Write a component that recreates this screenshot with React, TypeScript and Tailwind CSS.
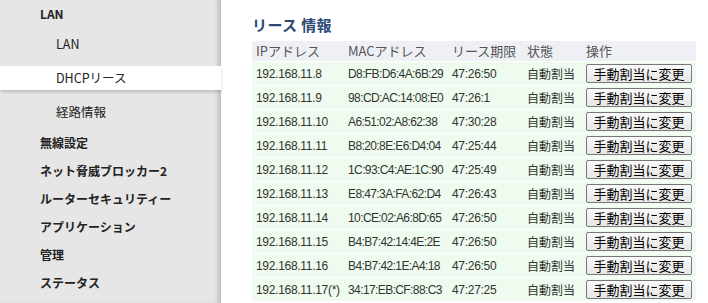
const NAV = [
  { label: 'LAN', level: 0, cls: 'h-[28px]' },
  { label: 'LAN', level: 1, cls: 'mt-[4px] h-[24px]' },
  { label: 'DHCPリース', level: 1, cls: 'mt-[10px] h-[24px]', active: true },
  { label: '経路情報', level: 1, cls: 'mt-[10px] h-[24px]' },
  { label: '無線設定', level: 0, cls: 'mt-[5px] h-[28px]' },
  { label: 'ネット脅威ブロッカー2', level: 0, cls: 'h-[27px]' },
  { label: 'ルーターセキュリティー', level: 0, cls: 'h-[29px]' },
  { label: 'アプリケーション', level: 0, cls: 'h-[28px]' },
  { label: '管理', level: 0, cls: 'h-[28px]' },
  { label: 'ステータス', level: 0, cls: 'h-[28px]' },
]

const LEASES = [
  ['192.168.11.8', 'D8:FB:D6:4A:6B:29', '47:26:50'],
  ['192.168.11.9', '98:CD:AC:14:08:E0', '47:26:1'],
  ['192.168.11.10', 'A6:51:02:A8:62:38', '47:30:28'],
  ['192.168.11.11', 'B8:20:8E:E6:D4:04', '47:25:44'],
  ['192.168.11.12', '1C:93:C4:AE:1C:90', '47:25:49'],
  ['192.168.11.13', 'E8:47:3A:FA:62:D4', '47:26:43'],
  ['192.168.11.14', '10:CE:02:A6:8D:65', '47:26:50'],
  ['192.168.11.15', 'B4:B7:42:14:4E:2E', '47:26:50'],
  ['192.168.11.16', 'B4:B7:42:1E:A4:18', '47:26:50'],
  ['192.168.11.17(*)', '34:17:EB:CF:88:C3', '47:27:25'],
]

const COLS = 'grid grid-cols-[92px_104px_75px_59px_114px]'

export default function App() {
  return (
    <div className="flex h-[303px] w-[708px] overflow-hidden bg-white font-['Noto_Sans_CJK_JP','Noto_Sans',sans-serif] text-[#222]">
      {/* Sidebar */}
      <div className="relative flex w-[221px] shrink-0 flex-col bg-[#e6e6e6] shadow-[inset_-6px_0_5px_-3px_rgba(0,0,0,0.18)]">
        {NAV.map((item, i) => (
          <div
            key={i}
            className={`flex shrink-0 items-center ${item.cls} ${
              item.level === 0 ? 'pl-10 text-[12px] font-bold' : 'pl-14 text-[12.5px]'
            } ${item.active ? 'relative z-10 bg-white shadow-[0_2px_3px_rgba(0,0,0,0.18)]' : ''}`}
          >
            {item.label}
          </div>
        ))}
      </div>

      {/* Content */}
      <div className="pl-[31px] pt-[14px]">
        <h2 className="mb-[5px] text-[15px] font-bold leading-[22px] tracking-wide text-[#2c4874]">リース 情報</h2>
        <div className="w-[444px] text-[12px]">
          <div className={`${COLS} h-[20px] items-center bg-[#eef0f6] text-[13px] text-[#555]`}>
            <div className="pl-1">IPアドレス</div>
            <div className="pl-1">MACアドレス</div>
            <div className="pl-1">リース期限</div>
            <div className="pl-1">状態</div>
            <div className="pl-1">操作</div>
          </div>
          {LEASES.map(([ip, mac, exp]) => (
            <div
              key={ip}
              className={`${COLS} mt-[1px] h-[23px] items-center bg-[#eefbee] font-['Liberation_Sans',sans-serif] text-[#333]`}
            >
              <div className="pl-1 tracking-tight">{ip}</div>
              <div className="pl-1 tracking-tighter">{mac}</div>
              <div className="pl-1 tracking-tight">{exp}</div>
              <div className="pl-1 font-['Noto_Sans_CJK_JP',sans-serif] text-[12px]">自動割当</div>
              <div className="pl-1">
                <button className="h-[19px] w-[106px] rounded-[2px] border border-[#777] bg-gradient-to-b from-[#fafafa] to-[#e6e6e6] font-['Noto_Sans_CJK_JP',sans-serif] text-[13px] leading-none text-black">
                  手動割当に変更
                </button>
              </div>
            </div>
          ))}
        </div>
      </div>
    </div>
  )
}
